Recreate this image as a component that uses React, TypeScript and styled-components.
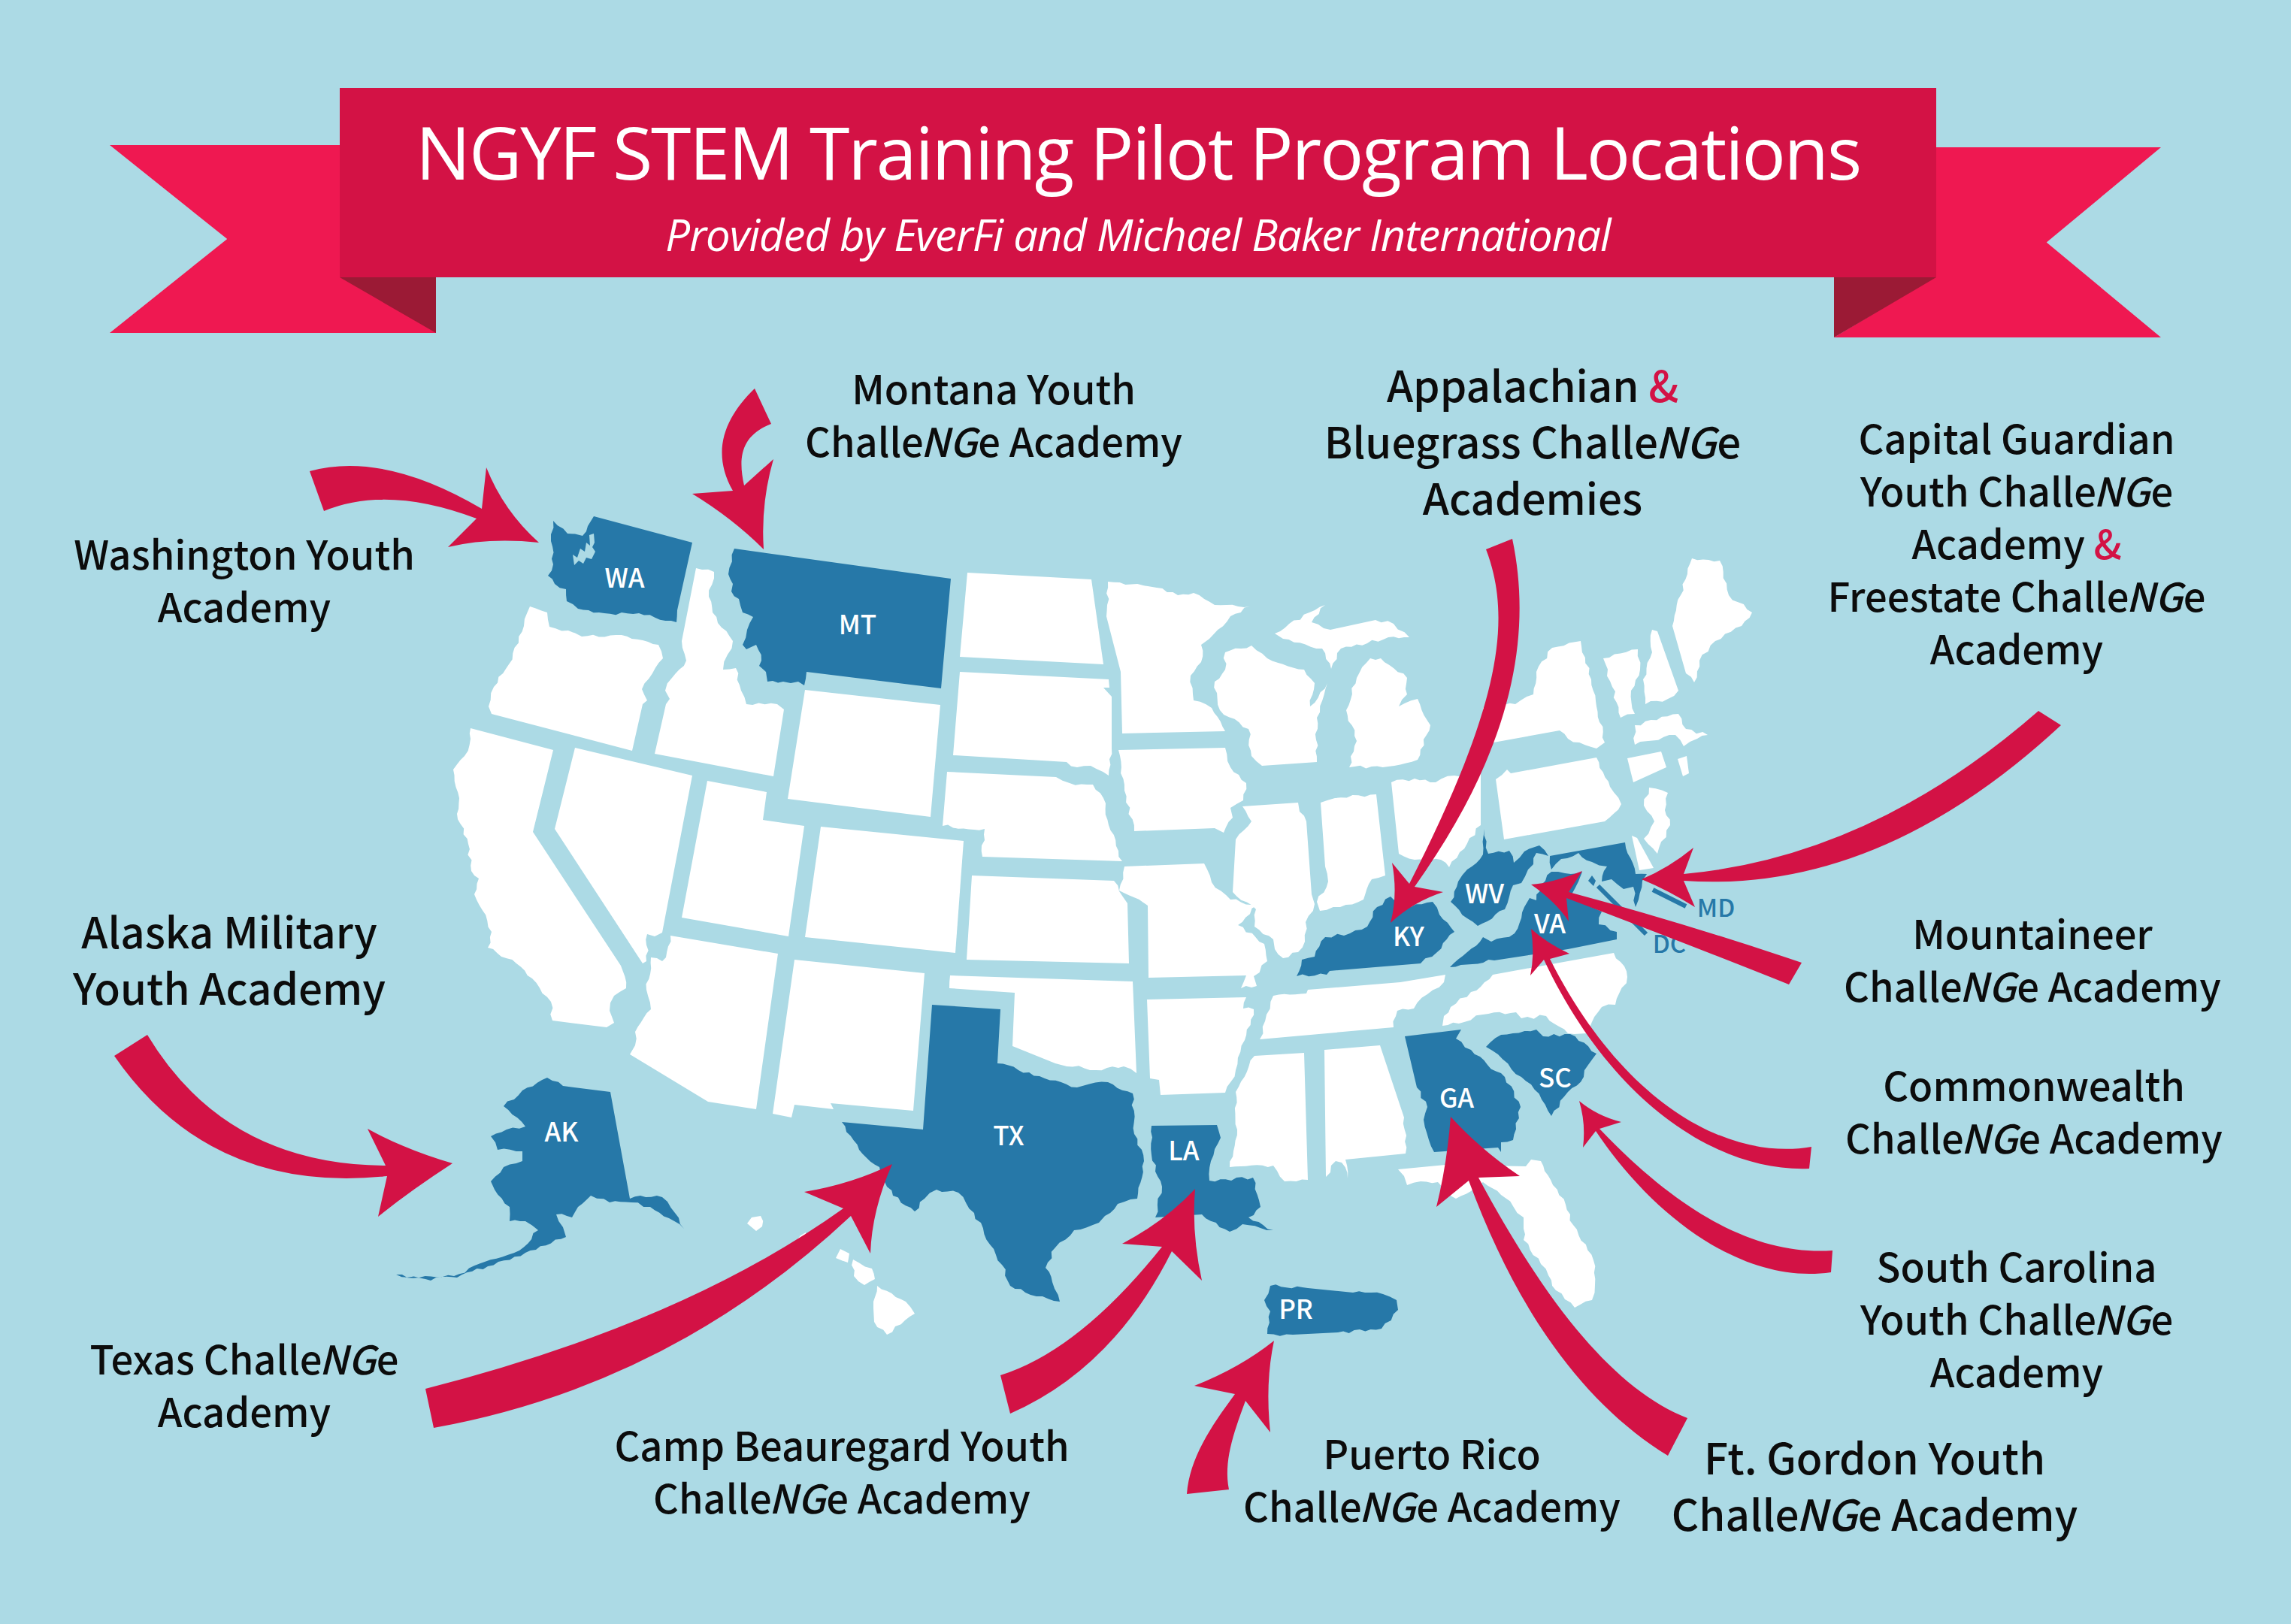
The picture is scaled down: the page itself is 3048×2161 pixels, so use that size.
import React from 'react';
import styled, { createGlobalStyle } from 'styled-components';

const GlobalStyle = createGlobalStyle`
  html, body {
    margin: 0;
    padding: 0;
    background: #acdae5;
  }
`;

const Stage = styled.div`
  position: relative;
  display: flex;
  flex-direction: column;
  width: 3048px;
  height: 2161px;
  overflow: hidden;
  background: #acdae5;
  padding: 117px 472px 0 452px;
  box-sizing: border-box;
  font-family: 'Noto Sans CJK JP', 'Noto Sans', sans-serif;
`;

const MapCanvas = styled.svg`
  position: absolute;
  left: 0;
  top: 0;
`;

const State = styled.polygon<{ $on?: boolean }>`
  fill: ${(p) => (p.$on ? '#2678a8' : '#ffffff')};
`;

const Water = styled.polygon`
  fill: #acdae5;
`;

const Arrow = styled.path`
  fill: #d31245;
`;

const Leader = styled.line`
  stroke: #2678a8;
  stroke-width: 6;
`;

const StateTag = styled.text<{ $outside?: boolean }>`
  font-family: 'Noto Sans CJK JP', 'Noto Sans', sans-serif;
  font-size: ${(p) => (p.$outside ? 33 : 35)}px;
  font-weight: 500;
  fill: ${(p) => (p.$outside ? '#2678a8' : '#ffffff')};
  text-anchor: middle;
`;

const Ribbon = styled.header`
  position: relative;
`;

const RibbonFace = styled.div`
  position: relative;
  display: flex;
  flex-direction: column;
  align-items: center;
  gap: 16px;
  height: 252px;
  box-sizing: border-box;
  padding-top: 24px;
  background: #d31245;
  color: #ffffff;
  font-family: 'Open Sans', 'Noto Sans', sans-serif;
`;

const Title = styled.h1`
  margin: 0;
  font-size: 97px;
  font-weight: 400;
  line-height: 120px;
  letter-spacing: -2.2px;
  white-space: nowrap;
`;

const Subtitle = styled.p`
  margin: 0;
  font-size: 58px;
  font-style: italic;
  font-weight: 400;
  line-height: 70px;
  letter-spacing: -1px;
  white-space: nowrap;
`;

const RibbonTail = styled.div<{ $side: 'left' | 'right' }>`
  position: absolute;
  top: ${(p) => (p.$side === 'left' ? 76 : 79)}px;
  ${(p) => (p.$side === 'left' ? 'left: -306px;' : 'right: -299px;')}
  width: ${(p) => (p.$side === 'left' ? 434 : 435)}px;
  height: ${(p) => (p.$side === 'left' ? 250 : 253)}px;
  background: #ef1851;
  clip-path: ${(p) =>
    p.$side === 'left'
      ? 'polygon(0 0, 100% 0, 100% 100%, 0 100%, 36% 50%)'
      : 'polygon(0 100%, 31% 68%, 31% 0, 100% 0, 65% 50%, 100% 100%)'};
`;

const RibbonFold = styled.div<{ $side: 'left' | 'right' }>`
  position: absolute;
  top: 252px;
  ${(p) => (p.$side === 'left' ? 'left: 0;' : 'right: 0;')}
  width: ${(p) => (p.$side === 'left' ? 128 : 136)}px;
  height: ${(p) => (p.$side === 'left' ? 74 : 80)}px;
  background: #9b1a35;
  clip-path: ${(p) =>
    p.$side === 'left' ? 'polygon(0 0, 100% 0, 100% 100%)' : 'polygon(0 0, 100% 0, 0 100%)'};
`;

const Label = styled.div<{ $x: number; $y: number; $big?: boolean }>`
  position: absolute;
  left: ${(p) => p.$x}px;
  top: ${(p) => p.$y - (p.$big ? 42 : 39)}px;
  transform: translateX(-50%);
  color: #0c0c0c;
  font-size: ${(p) => (p.$big ? 56.5 : 52.5)}px;
  font-weight: 500;
  line-height: ${(p) => (p.$big ? 75 : 70)}px;
  text-align: center;
  white-space: nowrap;

  em {
    margin: 0 1px 0 -4px;
  }
`;

const Amp = styled.span`
  color: #d31245;
`;

// coast and river edges get a little deterministic noise, survey lines stay straight
const roughen = (points: string, flat?: boolean) => {
  const pts = points.split(' ').map((p) => p.split(',').map(Number));
  if (flat) return points;
  const out: string[] = [];
  pts.forEach(([x, y], i) => {
    const [nx, ny] = pts[(i + 1) % pts.length];
    out.push(`${x},${y}`);
    const len = Math.hypot(nx - x, ny - y);
    if (len > 60) return;
    const steps = Math.floor(len / 7);
    for (let s = 1; s < steps; s++) {
      const t = s / steps;
      const n = Math.sin((x + s * 13.7) * 12.9898 + (y + s) * 78.233) * 43758.5453;
      const off = ((n - Math.floor(n)) - 0.5) * 4.6;
      const px = x + (nx - x) * t + (-(ny - y) / len) * off;
      const py = y + (ny - y) * t + ((nx - x) / len) * off;
      out.push(`${px.toFixed(1)},${py.toFixed(1)}`);
    }
  });
  return out.join(' ');
};

const states: { points: string; on?: boolean; flat?: boolean }[] = [
  { points: '926,756 950,761 943,794 948,815 960,835 975,853 968,871 962,891 979,889 986,919 993,937 1034,937 1043,944 1029,1033 871,1003 886,937 891,930 885,919 894,902 913,879 907,853' },
  { points: '705,807 728,815 731,834 756,839 774,847 827,845 876,858 882,876 868,896 854,917 861,932 855,937 841,999 654,950 650,940 657,914 677,884 697,833' },
  { points: '626,969 736,998 709,1107 826,1285 833,1315 817,1325 811,1345 817,1361 807,1367 735,1358 733,1333 708,1302 687,1282 649,1261 654,1240 631,1190 637,1169 627,1159 623,1123 608,1083 611,1062 603,1024 618,1006 626,983' },
  { points: '765,995 921,1032 881,1241 871,1246 861,1243 860,1279 855,1282 738,1103' },
  { points: '941,1039 1020,1054 1015,1091 1070,1099 1049,1246 907,1221', flat: true },
  { points: '1071,918 1251,938 1238,1087 1048,1063', flat: true },
  { points: '1092,1100 1282,1119 1271,1268 1071,1247', flat: true },
  { points: '892,1245 1035,1269 1006,1476 942,1466 838,1403 845,1391 845,1373 866,1343 860,1317 866,1274 881,1279 886,1274' },
  { points: '1057,1277 1230,1295 1215,1478 1105,1468 1109,1476 1057,1470 1053,1487 1028,1482', flat: true },
  { points: '1287,762 1452,771 1468,884 1277,874' },
  { points: '1277,894 1475,904 1476,915 1468,915 1479,927 1479,996 1475,1032 1451,1019 1433,1021 1419,1014 1268,1005' },
  { points: '1260,1027 1405,1034 1423,1042 1454,1044 1468,1062 1475,1098 1493,1146 1307,1140 1310,1103 1254,1099' },
  { points: '1293,1165 1482,1172 1489,1186 1500,1202 1502,1282 1286,1277' },
  { points: '1264,1298 1507,1306 1512,1428 1495,1419 1458,1424 1404,1415 1347,1392 1350,1321 1263,1315' },
  { points: '1526,1330 1658,1327 1654,1342 1668,1343 1656,1384 1644,1424 1630,1454 1544,1457 1542,1437 1530,1435' },
  { points: '1669,1405 1735,1401 1740,1570 1709,1572 1694,1551 1636,1553 1646,1503 1644,1453' },
  { points: '1762,1397 1836,1391 1868,1487 1870,1535 1790,1543 1793,1568 1785,1547 1777,1545 1764,1566' },
  { points: '1986,1297 2147,1268 2156,1280 2165,1300 2149,1337 2131,1340 2111,1375 2086,1375 2057,1352 2024,1355 2017,1347 1973,1350 1948,1360 1919,1365 1921,1352 1930,1340 1957,1320 1970,1313' },
  { points: '1694,1325 1738,1322 1740,1317 1863,1307 1923,1297 1921,1307 1899,1323 1881,1342 1859,1345 1854,1367 1676,1383 1685,1350' },
  { points: '1653,1073 1727,1068 1729,1080 1738,1093 1745,1190 1749,1203 1737,1227 1736,1253 1727,1267 1707,1275 1696,1263 1694,1250 1669,1233 1671,1210 1640,1187 1644,1117 1665,1093' },
  { points: '1757,1068 1776,1062 1831,1057 1843,1165 1825,1170 1814,1197 1783,1207 1756,1212 1752,1200 1767,1173 1763,1153' },
  { points: '1851,1041 1882,1036 1910,1041 1935,1032 1970,1027 1970,1098 1942,1134 1928,1154 1917,1144 1882,1144 1861,1136' },
  { points: '1990,1037 2005,1024 2010,1029 2124,1008 2142,1047 2157,1070 2135,1093 2001,1117' },
  { points: '1973,945 1987,988 2075,972 2086,983 2124,996 2135,988 2124,940 2117,904 2103,853 2065,862 2044,894 2040,924 2016,937 1973,942' },
  { points: '2133,876 2179,864 2182,891 2170,919 2175,950 2156,955 2145,914' },
  { points: '2198,838 2205,840 2233,919 2219,930 2189,937 2186,904 2198,868' },
  { points: '2251,743 2288,746 2300,792 2331,815 2317,833 2282,853 2261,879 2254,908 2243,896 2225,833 2236,792' },
  { points: '2175,965 2233,950 2243,970 2272,978 2258,983 2240,993 2229,978 2175,991' },
  { points: '2165,1009 2210,1000 2217,1021 2173,1041', flat: true },
  { points: '2232,1010 2244,1006 2247,1029 2239,1033', flat: true },
  { points: '2194,1048 2219,1055 2215,1078 2222,1098 2205,1136 2187,1116 2201,1093 2187,1072' },
  { points: '2171,1112 2178,1115 2200,1155 2181,1158', flat: true },
  { points: '1474,774 1521,779 1539,782 1567,792 1588,789 1616,805 1663,807 1637,820 1609,850 1598,858 1598,881 1584,899 1588,932 1612,942 1630,973 1493,976 1491,894 1474,828' },
  { points: '1488,998 1630,995 1637,1021 1658,1042 1654,1065 1637,1075 1640,1088 1628,1108 1616,1102 1509,1106 1496,1052' },
  { points: '1496,1153 1602,1149 1612,1174 1637,1197 1672,1205 1647,1231 1682,1256 1686,1279 1668,1299 1672,1312 1651,1315 1658,1298 1528,1301 1527,1205 1489,1185' },
  { points: '1630,868 1665,859 1686,876 1735,891 1749,909 1743,940 1766,909 1752,955 1752,1014 1679,1019 1665,1006 1661,970 1623,945 1616,907 1630,891' },
  { points: '1696,843 1742,815 1763,805 1745,828 1770,838 1830,825 1854,830 1875,848 1847,848 1819,856 1784,863 1771,890 1759,863 1707,850' },
  { points: '1795,1021 1805,986 1791,945 1805,902 1823,876 1837,876 1872,902 1872,924 1861,940 1886,930 1903,965 1886,1011 1847,1020' },
  { points: '1860,1556 1923,1550 2030,1552 2037,1543 2050,1545 2063,1570 2083,1603 2093,1630 2120,1677 2122,1710 2118,1730 2095,1740 2070,1717 2060,1697 2050,1682 2027,1650 2027,1620 2013,1605 1997,1590 1973,1573 1957,1585 1937,1595 1913,1573 1890,1572 1872,1577 1868,1565' },
  { points: '1167,1711 1205,1732 1217,1748 1180,1776 1163,1759 1162,1732' },
  { points: '1118,1662 1130,1668 1128,1680 1112,1674' },
  { points: '1135,1676 1160,1688 1164,1702 1150,1710 1136,1698' },
  { points: '1000,1620 1012,1618 1014,1632 1006,1638 994,1628' },
  { points: '1060,1650 1072,1640 1082,1660 1070,1665' },
  { points: '736,693 755,710 775,713 782,700 790,687 921,722 901,812 900,828 850,816 804,816 769,810 754,800 753,784 738,777 729,766 736,751 733,720', on: true },
  { points: '977,730 1265,770 1252,916 1073,894 1070,912 1062,907 1042,907 1021,907 1019,894 1010,886 1013,879 1006,858 993,864 988,858 994,838 1002,821 988,815 983,797 973,787 975,777 969,764', on: true },
  { points: '1240,1337 1331,1343 1327,1415 1383,1432 1433,1447 1474,1440 1507,1455 1509,1509 1522,1545 1513,1595 1487,1602 1470,1618 1462,1627 1429,1637 1404,1660 1391,1687 1400,1706 1410,1732 1371,1723 1344,1711 1333,1683 1317,1656 1296,1614 1275,1587 1246,1583 1230,1595 1217,1612 1188,1591 1170,1553 1143,1530 1120,1493 1228,1503', on: true },
  { points: '1532,1498 1619,1497 1624,1514 1611,1545 1609,1571 1667,1567 1675,1597 1677,1606 1661,1620 1694,1637 1653,1629 1636,1639 1599,1616 1537,1620 1546,1579 1532,1537', on: true },
  { points: '728,1434 749,1445 812,1453 838,1595 852,1591 881,1593 898,1614 910,1635 890,1621 865,1606 840,1600 811,1600 786,1591 769,1606 761,1620 740,1616 749,1633 753,1646 699,1667 649,1685 608,1700 566,1702 527,1696 558,1700 604,1698 645,1679 691,1664 716,1637 699,1625 678,1625 678,1606 658,1583 653,1572 670,1553 695,1545 695,1532 662,1530 653,1512 674,1503 699,1499 670,1472 695,1451', on: true },
  { points: '1690,1711 1740,1714 1800,1720 1840,1722 1858,1730 1860,1743 1838,1768 1780,1773 1720,1776 1686,1775 1690,1745 1682,1730', on: true },
  { points: '1869,1379 1944,1370 1937,1382 1957,1397 1979,1417 2002,1433 2023,1473 2013,1517 1997,1520 1997,1533 1993,1527 1908,1533 1901,1517 1894,1490 1899,1473 1885,1447', on: true },
  { points: '1977,1393 1997,1377 2044,1370 2053,1379 2089,1376 2124,1402 2113,1417 2107,1433 2086,1453 2064,1485 2051,1463 2037,1443 2011,1423 1993,1403', on: true },
  { points: '1725,1299 1732,1277 1749,1273 1763,1247 1796,1242 1819,1233 1832,1207 1850,1193 1859,1207 1877,1207 1906,1200 1915,1217 1935,1240 1912,1267 1890,1282 1769,1292 1765,1297', on: true },
  { points: '1975,1103 1980,1136 2008,1132 2014,1148 2028,1133 2048,1125 2060,1139 2044,1135 2040,1150 2033,1157 2024,1175 2013,1178 2008,1193 2002,1210 1966,1232 1952,1222 1930,1200 1940,1173 1952,1157 1973,1137', on: true },
  { points: '1929,1287 1952,1267 1973,1247 1984,1253 2015,1242 2028,1207 2035,1195 2044,1198 2051,1177 2064,1160 2082,1162 2105,1160 2100,1173 2091,1190 2109,1200 2131,1213 2127,1230 2151,1240 2151,1250 2086,1263 1988,1278', on: true },
  { points: '2062,1139 2162,1121 2176,1163 2191,1163 2185,1172 2180,1197 2176,1207 2173,1180 2160,1183 2144,1170 2131,1173 2138,1153 2118,1147 2100,1135 2077,1143 2064,1157', on: true },
  { points: '2118,1165 2123,1172 2120,1179 2113,1172', on: true, flat: true },
];

const arrows = [
  'M412 627 Q510 600 641 677 L647 622 Q670 680 717 722 Q650 715 596 728 L634 690 Q515 645 431 680 Z',
  'M1004 517 C965 555 945 600 975 653 L921 657 Q975 690 1016 731 Q1012 670 1029 611 L990 646 C982 610 985 580 1026 564 Z',
  'M196 1377 Q300 1550 513 1551 L489 1502 Q540 1530 602 1548 Q545 1585 503 1619 L515 1565 Q280 1590 152 1405 Z',
  'M566 1848 Q910 1760 1122 1608 L1070 1586 Q1135 1575 1187 1549 Q1160 1610 1158 1668 L1132 1618 Q892 1843 577 1900 Z',
  'M1331 1830 Q1436 1797 1546 1659 L1493 1655 Q1550 1625 1590 1582 Q1585 1640 1599 1704 L1559 1665 Q1481 1821 1344 1881 Z',
  'M1579 1988 C1583 1940 1610 1900 1643 1855 L1589 1844 Q1650 1820 1695 1784 Q1683 1840 1690 1906 L1657 1864 C1640 1910 1628 1945 1635 1982 Z',
  'M2245 1887 C2150 1850 2060 1740 1967 1567 L2022 1565 Q1970 1530 1930 1486 Q1925 1550 1911 1606 L1954 1571 C2020 1750 2110 1870 2219 1937 Z',
  'M2438 1664 C2350 1670 2250 1630 2128 1502 L2157 1493 Q2125 1485 2101 1465 Q2110 1495 2106 1527 L2123 1505 C2200 1620 2320 1710 2436 1693 Z',
  'M2410 1526 C2300 1545 2160 1470 2062 1276 L2088 1269 Q2058 1255 2037 1236 Q2042 1270 2036 1298 L2054 1277 C2140 1460 2280 1560 2407 1555 Z',
  'M2397 1281 Q2240 1228 2087 1187 L2105 1159 Q2065 1175 2037 1177 Q2070 1200 2087 1226 L2084 1195 Q2250 1258 2380 1310 Z',
  'M2712 946 Q2490 1140 2240 1163 L2253 1128 Q2220 1155 2184 1170 Q2220 1185 2255 1207 L2240 1172 Q2500 1190 2742 965 Z',
  'M2012 717 C2040 850 2010 1000 1882 1180 L1920 1187 Q1880 1200 1850 1228 Q1860 1190 1852 1148 L1875 1176 C1990 950 2015 830 1977 731 Z',
];

const tags = [
  { name: 'WA', x: 831, y: 782 },
  { name: 'MT', x: 1141, y: 844 },
  { name: 'KY', x: 1874, y: 1259 },
  { name: 'WV', x: 1975, y: 1202 },
  { name: 'VA', x: 2062, y: 1242 },
  { name: 'SC', x: 2069, y: 1447 },
  { name: 'GA', x: 1938, y: 1474 },
  { name: 'AK', x: 747, y: 1519 },
  { name: 'TX', x: 1342, y: 1524 },
  { name: 'LA', x: 1575, y: 1544 },
  { name: 'PR', x: 1724, y: 1755 },
];

const Nge = () => (
  <>
    Challe<em>NG</em>e
  </>
);

const App: React.FC = () => {
  return (
    <Stage>
      <GlobalStyle />
      <MapCanvas width={3048} height={2161} viewBox="0 0 3048 2161">
        {states.map((s) => (
          <State key={s.points} points={roughen(s.points, s.flat)} $on={s.on} />
        ))}
        <Water points="762,738 768,742 772,730 778,734 780,722 785,726 784,712 790,710 791,722 788,728 792,734 787,744 780,742 776,750 770,746 764,752" />
        <Leader x1={2126} y1={1179} x2={2190} y2={1243} />
        <Leader x1={2199} y1={1184} x2={2243} y2={1206} />
        {tags.map((t) => (
          <StateTag key={t.name} x={t.x} y={t.y}>
            {t.name}
          </StateTag>
        ))}
        <StateTag $outside x={2283} y={1220}>
          MD
        </StateTag>
        <StateTag $outside x={2221} y={1268}>
          DC
        </StateTag>
        {arrows.map((d) => (
          <Arrow key={d} d={d} />
        ))}
      </MapCanvas>

      <Ribbon>
        <RibbonTail $side="left" />
        <RibbonTail $side="right" />
        <RibbonFold $side="left" />
        <RibbonFold $side="right" />
        <RibbonFace>
          <Title>NGYF STEM Training Pilot Program Locations</Title>
          <Subtitle>Provided by EverFi and Michael Baker International</Subtitle>
        </RibbonFace>
      </Ribbon>

      <Label $x={325} $y={739}>
        Washington Youth
        <br />
        Academy
      </Label>
      <Label $x={1322} $y={519}>
        Montana Youth
        <br />
        <Nge /> Academy
      </Label>
      <Label $big $x={2039} $y={515}>
        Appalachian <Amp>&amp;</Amp>
        <br />
        Bluegrass <Nge />
        <br />
        Academies
      </Label>
      <Label $x={2683} $y={585}>
        Capital Guardian
        <br />
        Youth <Nge />
        <br />
        Academy <Amp>&amp;</Amp>
        <br />
        Freestate <Nge />
        <br />
        Academy
      </Label>
      <Label $x={2704} $y={1244}>
        Mountaineer
        <br />
        <Nge /> Academy
      </Label>
      <Label $x={2706} $y={1446}>
        Commonwealth
        <br />
        <Nge /> Academy
      </Label>
      <Label $x={2683} $y={1687}>
        South Carolina
        <br />
        Youth <Nge />
        <br />
        Academy
      </Label>
      <Label $big $x={2494} $y={1942}>
        Ft. Gordon Youth
        <br />
        <Nge /> Academy
      </Label>
      <Label $x={1905} $y={1936}>
        Puerto Rico
        <br />
        <Nge /> Academy
      </Label>
      <Label $x={1120} $y={1925}>
        Camp Beauregard Youth
        <br />
        <Nge /> Academy
      </Label>
      <Label $x={325} $y={1810}>
        Texas <Nge />
        <br />
        Academy
      </Label>
      <Label $big $x={305} $y={1242}>
        Alaska Military
        <br />
        Youth Academy
      </Label>
    </Stage>
  );
};

export default App;
